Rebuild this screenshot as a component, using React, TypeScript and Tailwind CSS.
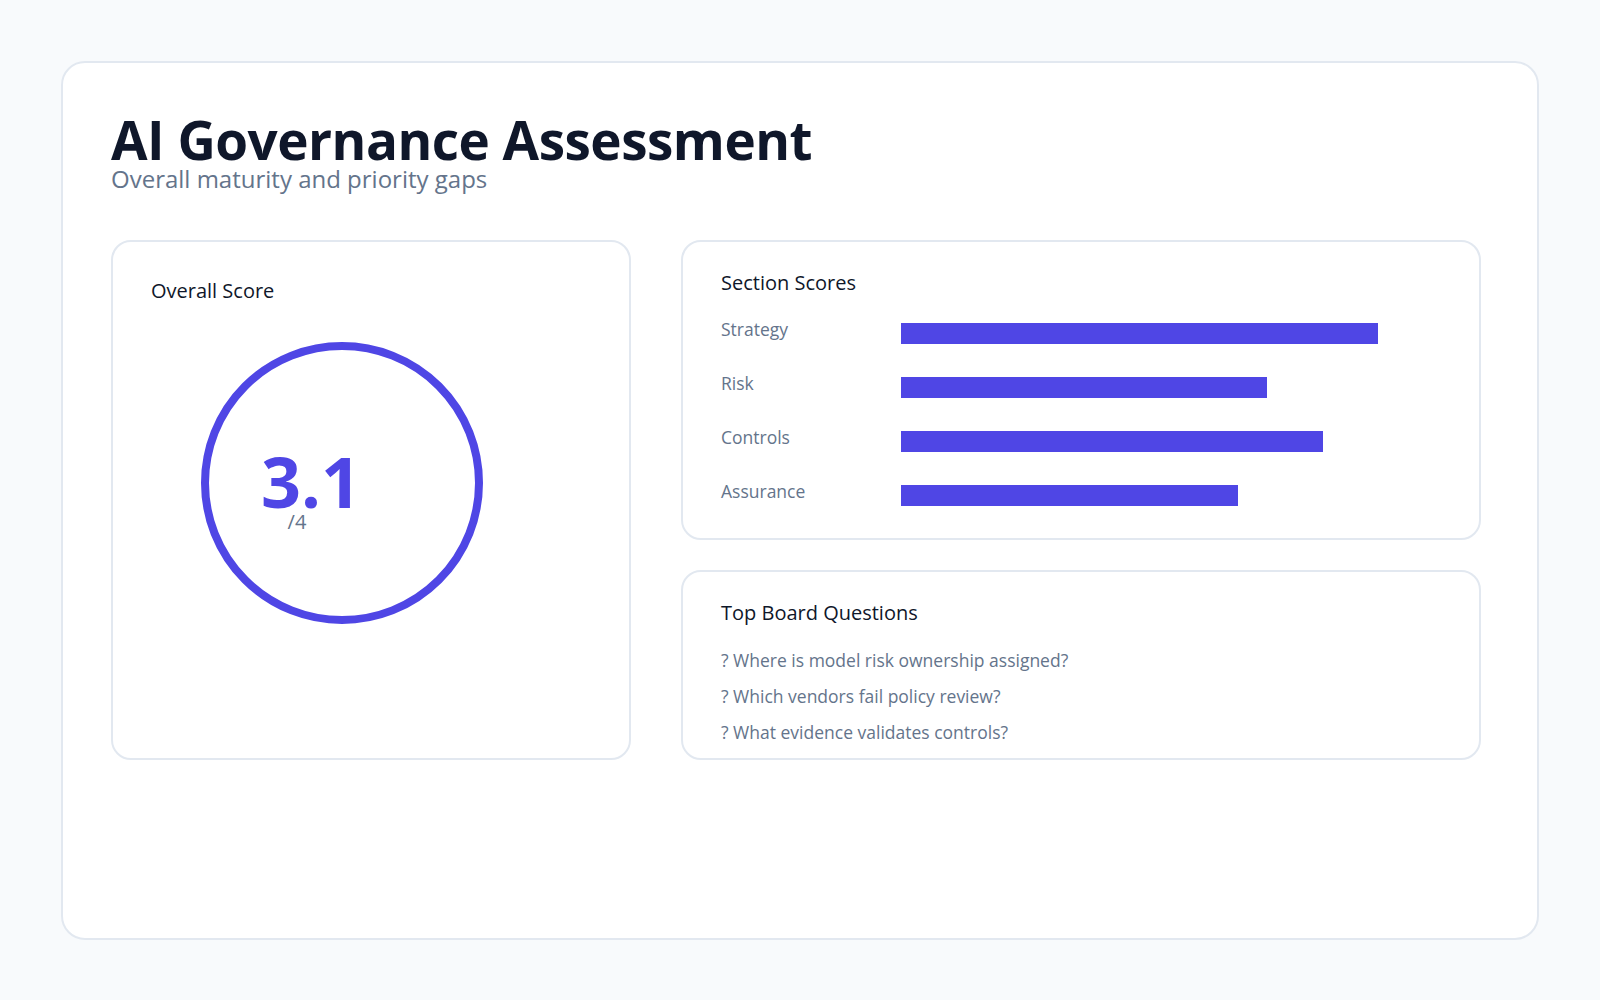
export default function App() {
  const bars = [
    { label: 'Strategy', w: 477 },
    { label: 'Risk', w: 366 },
    { label: 'Controls', w: 422 },
    { label: 'Assurance', w: 337 },
  ];
  const questions = [
    '? Where is model risk ownership assigned?',
    '? Which vendors fail policy review?',
    '? What evidence validates controls?',
  ];
  return (
    <div className="min-h-screen bg-[#f8fafc] p-[61px] pb-[60px]" style={{ fontFamily: '"Open Sans", "Noto Sans", sans-serif' }}>
      <div className="h-[879px] rounded-[24px] border-2 border-[#e2e8f0] bg-white pl-[48px] pr-[56px] pt-[50px]">
        <h1 className="text-[53px] font-bold leading-[54px] text-[#0f172a] tracking-[-0.5px]">AI Governance Assessment</h1>
        <p className="text-[24px] leading-[24px] text-[#64748b]">Overall maturity and priority gaps</p>
        <div className="mt-[49px] flex gap-[50px]">
          <div className="h-[520px] w-[520px] rounded-[20px] border-2 border-[#e2e8f0] px-[38px] pt-[34px]">
            <div className="text-[20px] text-[#0f172a]">Overall Score</div>
            <div className="ml-[50px] mt-[36px] flex h-[282px] w-[282px] items-center rounded-full border-[8px] border-[#4f46e5]">
              <div className="ml-[52px] mt-[16px] flex flex-col items-center">
                <div className="text-[70px] font-bold leading-[62px] text-[#4f46e5]">3.1</div>
                <div className="-ml-[28px] text-[20px] leading-[20px] text-[#64748b]">/4</div>
              </div>
            </div>
          </div>
          <div className="flex flex-1 flex-col gap-[30px]">
            <div className="h-[300px] rounded-[20px] border-2 border-[#e2e8f0] px-[38px] pt-[26px]">
              <div className="text-[20px] text-[#0f172a]">Section Scores</div>
              <div className="mt-[20px] flex flex-col gap-[28px]">
                {bars.map((b) => (
                  <div key={b.label} className="flex items-start">
                    <div className="w-[180px] text-[17.5px] leading-[22px] text-[#64748b]">{b.label}</div>
                    <div className="mt-[5px] h-[21px] bg-[#4f46e5]" style={{ width: b.w }} />
                  </div>
                ))}
              </div>
            </div>
            <div className="flex-1 rounded-[20px] border-2 border-[#e2e8f0] px-[38px] pt-[26px]">
              <div className="text-[20px] text-[#0f172a]">Top Board Questions</div>
              <div className="mt-[20px] flex flex-col gap-[12px]">
                {questions.map((q) => (
                  <div key={q} className="text-[17.5px] leading-[24px] text-[#64748b]">{q}</div>
                ))}
              </div>
            </div>
          </div>
        </div>
      </div>
    </div>
  );
}
